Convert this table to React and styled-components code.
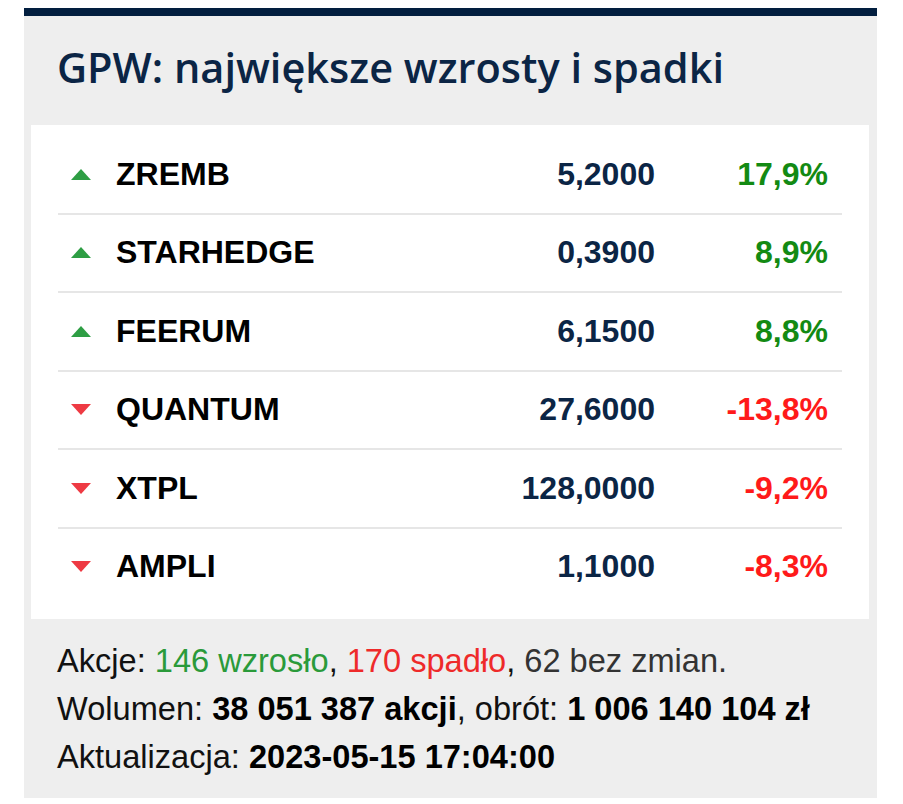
import React from 'react'
import styled, { createGlobalStyle } from 'styled-components'

const Global = createGlobalStyle`
  body {
    margin: 8px;
    background: #fff;
    font-family: "Liberation Sans", Arial, sans-serif;
  }
`

const Card = styled.section`
  width: 853px;
  margin-left: 16px;
  background: #eeeeee;
  border-top: 8px solid #021e3f;
`

const Title = styled.h2`
  margin: 0;
  height: 109px;
  display: flex;
  align-items: center;
  padding: 0 0 8px 33px;
  box-sizing: border-box;
  font-family: "Open Sans", "Noto Sans", sans-serif;
  font-weight: 600;
  font-size: 41.5px;
  color: #0b2545;
`

const Panel = styled.div`
  margin: 0 8px 0 7px;
  background: #fff;
  padding: 11px 27px 14px;
`

const Row = styled.div`
  display: flex;
  align-items: center;
  height: 76.5px;
  & + & {
    border-top: 2px solid #e6e6e6;
  }
`

const Arrow = styled.span`
  width: 0;
  height: 0;
  margin: 0 25px 0 13px;
  border-left: 10px solid transparent;
  border-right: 10px solid transparent;
  ${p => p.$up
    ? 'border-bottom: 11px solid #2e9e44;'
    : 'border-top: 11px solid #ee3a43;'}
`

const Name = styled.span`
  flex: 1;
  font-weight: bold;
  font-size: 32px;
  color: #000;
`

const Price = styled.span`
  font-weight: bold;
  font-size: 32px;
  color: #0b2545;
  text-align: right;
`

const Change = styled.span`
  width: 187px;
  padding-right: 14px;
  box-sizing: border-box;
  text-align: right;
  font-weight: bold;
  font-size: 32px;
  color: ${p => (p.$up ? '#138a13' : '#ff1a1a')};
`

const Footer = styled.div`
  padding: 18px 20px 17px 33px;
  font-family: "Liberation Sans", Arial, sans-serif;
  font-size: 32.6px;
  line-height: 48px;
  color: #111;
  white-space: nowrap;
  b { font-weight: bold; color: #000; }
`

const Line = styled.div``

const Tone = styled.span`
  color: ${p => p.$c};
`

const rows = [
  { name: 'ZREMB', price: '5,2000', change: '17,9%', up: true },
  { name: 'STARHEDGE', price: '0,3900', change: '8,9%', up: true },
  { name: 'FEERUM', price: '6,1500', change: '8,8%', up: true },
  { name: 'QUANTUM', price: '27,6000', change: '-13,8%', up: false },
  { name: 'XTPL', price: '128,0000', change: '-9,2%', up: false },
  { name: 'AMPLI', price: '1,1000', change: '-8,3%', up: false },
]

const App = () => {
  return (
    <>
      <Global />
      <Card>
        <Title>GPW: największe wzrosty i spadki</Title>
        <Panel>
          {rows.map(r => (
            <Row key={r.name}>
              <Arrow $up={r.up} />
              <Name>{r.name}</Name>
              <Price>{r.price}</Price>
              <Change $up={r.up}>{r.change}</Change>
            </Row>
          ))}
        </Panel>
        <Footer>
          <Line>
            Akcje: <Tone $c="#2a9a3a">146 wzrosło</Tone>, <Tone $c="#ee2a2a">170 spadło</Tone>, <Tone $c="#333">62 bez zmian.</Tone>
          </Line>
          <Line>
            Wolumen: <b>38 051 387 akcji</b>, obrót: <b>1 006 140 104 zł</b>
          </Line>
          <Line>
            Aktualizacja: <b>2023-05-15 17:04:00</b>
          </Line>
        </Footer>
      </Card>
    </>
  )
}

export default App
